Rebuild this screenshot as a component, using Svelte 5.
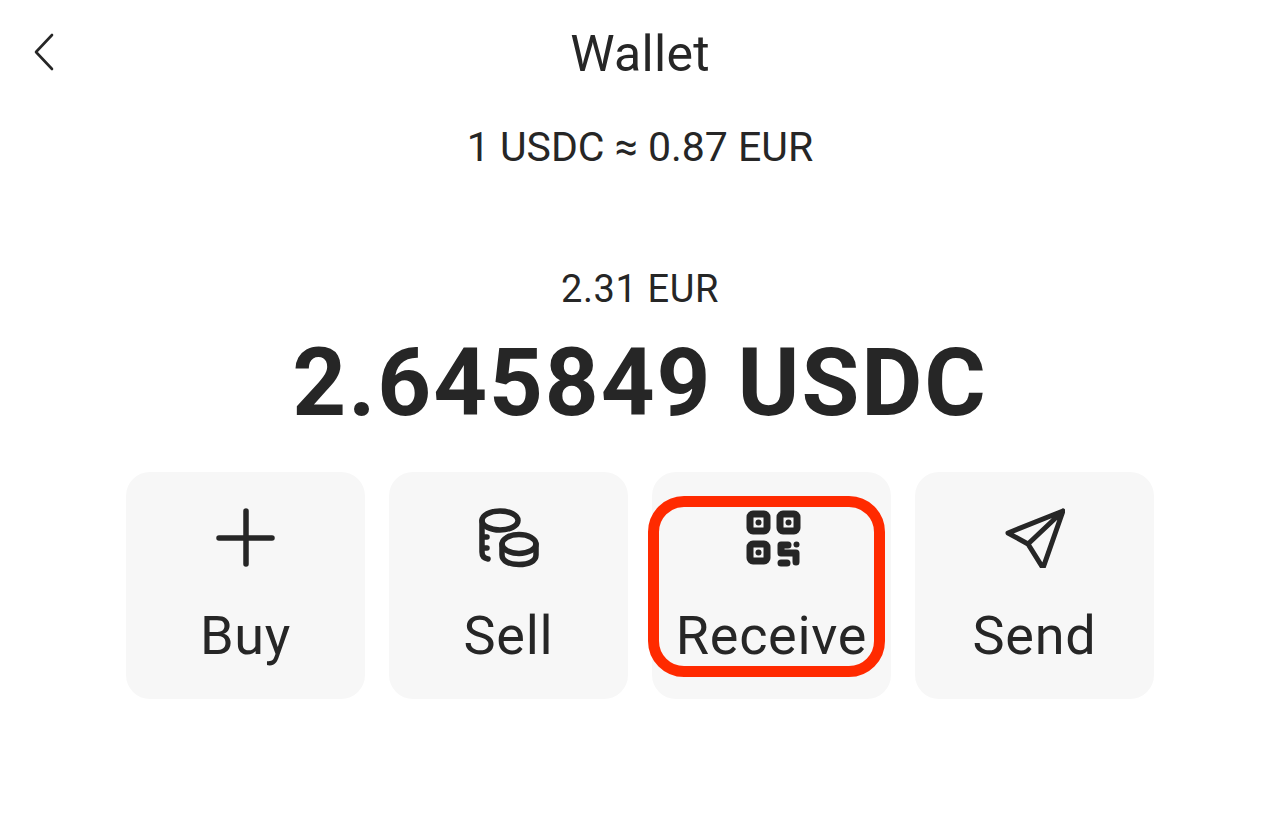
<script>
	const actions = [
		{ label: 'Buy', icon: 'plus' },
		{ label: 'Sell', icon: 'coins' },
		{ label: 'Receive', icon: 'qr', marked: true },
		{ label: 'Send', icon: 'send' }
	];
</script>

<main class="page">
	<header class="top">
		<button class="back" aria-label="Back">
			<svg width="24" height="40" viewBox="0 0 24 40" fill="none" stroke="#262626" stroke-width="2.6" stroke-linecap="round" stroke-linejoin="round">
				<path d="M20 3 L4 20 L20 37" />
			</svg>
		</button>
		<h1>Wallet</h1>
	</header>

	<p class="rate">1 USDC ≈ 0.87 EUR</p>

	<section class="balance">
		<p class="fiat">2.31 EUR</p>
		<p class="amount">2.645849 USDC</p>
	</section>

	<div class="actions">
		{#each actions as action}
			<div class="card">
				<div class="icon">
					{#if action.icon === 'plus'}
						<svg width="60" height="60" viewBox="0 0 60 60" fill="none" stroke="#262626" stroke-width="5.5" stroke-linecap="round">
							<path d="M30 3 V56 M3 30 H56" />
						</svg>
					{:else if action.icon === 'coins'}
						<svg width="60" height="60" viewBox="0 0 60 60" fill="none" stroke="#262626" stroke-width="5.5" stroke-linecap="round" stroke-linejoin="round">
							<ellipse cx="21" cy="12.5" rx="18" ry="9.5" />
							<path d="M3 13 V44 Q3 50 9 51 M3 29 H8 M3 40 H8" />
							<ellipse cx="40" cy="36" rx="17" ry="9.5" />
							<path d="M23 36 V47 C23 53 30 56.5 40 56.5 C50 56.5 57 53 57 47 V36" />
						</svg>
					{:else if action.icon === 'qr'}
						<svg class="qr" width="60" height="60" viewBox="0 0 60 60" fill="none" stroke="#262626" stroke-width="7" stroke-linecap="round" stroke-linejoin="round">
							<rect x="8" y="6" width="17" height="17" rx="3" />
							<rect x="38" y="6" width="17" height="17" rx="3" />
							<rect x="8" y="36" width="17" height="17" rx="3" />
							<path d="M46 37 H39 V45 H54 V54 M39 55 H45" />
							<g fill="#262626" stroke="none">
								<circle cx="16.5" cy="14.5" r="3" />
								<circle cx="46.5" cy="14.5" r="3" />
								<circle cx="16.5" cy="44.5" r="3" />
								<circle cx="54.5" cy="36.5" r="3" />
							</g>
						</svg>
					{:else}
						<svg width="60" height="60" viewBox="0 0 60 60" fill="none" stroke="#262626" stroke-width="5" stroke-linecap="round" stroke-linejoin="round">
							<path d="M58 3 L3 25 L23 36 L38 60 Z M58 3 L23 36" />
						</svg>
					{/if}
				</div>
				<span class="label">{action.label}</span>
				{#if action.marked}
					<span class="mark"></span>
				{/if}
			</div>
		{/each}
	</div>
</main>

<style>
	:global(body) {
		background: #fff;
	}
	.page {
		width: 1280px;
		height: 815px;
		overflow: hidden;
		display: flex;
		flex-direction: column;
		align-items: center;
		font-family: Roboto, "Liberation Sans", sans-serif;
		color: #262626;
	}
	.top {
		width: 100%;
		height: 104px;
		display: flex;
		align-items: center;
		justify-content: center;
		position: relative;
	}
	.back {
		position: absolute;
		left: 32px;
		top: 32px;
		padding: 0;
		border: 0;
		background: none;
		display: flex;
	}
	h1 {
		margin: 4px 0 0;
		font-size: 50px;
		font-weight: 400;
		line-height: 56px;
		letter-spacing: 0.3px;
	}
	.rate {
		margin: 19px 0 0;
		font-size: 41px;
		font-weight: 400;
		line-height: 48px;
	}
	.balance {
		margin-top: 94px;
		display: flex;
		flex-direction: column;
		align-items: center;
	}
	.fiat {
		margin: 0;
		font-size: 38px;
		line-height: 48px;
		letter-spacing: 0.6px;
	}
	.amount {
		margin: 20px 0 0;
		font-size: 94px;
		font-weight: 700;
		line-height: 100px;
		letter-spacing: 1.9px;
	}
	.actions {
		margin-top: 39px;
		display: flex;
		gap: 24px;
	}
	.card {
		width: 239px;
		height: 227px;
		box-sizing: border-box;
		padding-top: 36px;
		background: #f7f7f7;
		border-radius: 24px;
		display: flex;
		flex-direction: column;
		align-items: center;
		position: relative;
	}
	.icon {
		height: 60px;
		display: flex;
	}
	.label {
		margin-top: 37px;
		font-size: 54px;
		line-height: 62px;
		letter-spacing: 0.7px;
	}
	.mark {
		position: absolute;
		left: -4px;
		top: 24px;
		width: 237px;
		height: 181px;
		box-sizing: border-box;
		border: 11px solid #ff2a00;
		border-radius: 36px;
	}
</style>
